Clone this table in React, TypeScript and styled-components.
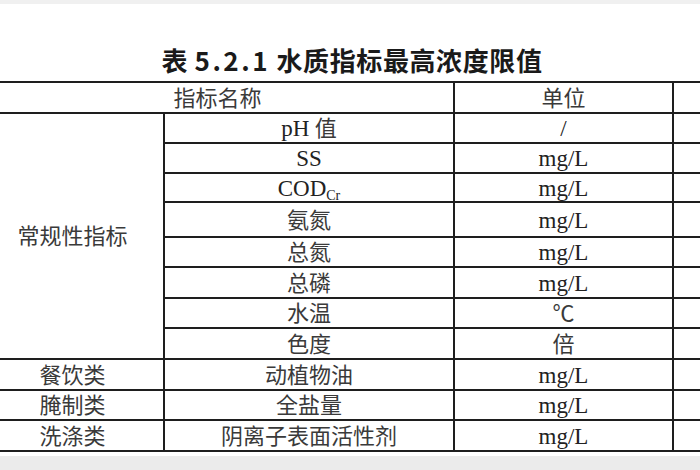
import React from "react";
import styled, { createGlobalStyle } from "styled-components";

const GlobalStyle = createGlobalStyle`
  body {
    margin: 0;
    background: #fff;
  }
`;

const Page = styled.div`
  width: 700px;
  height: 470px;
  overflow: hidden;
  display: flex;
  flex-direction: column;
  background: #fff;
`;

const TopBand = styled.div`
  height: 4px;
  background: #f0f0f0;
`;

const Title = styled.h1`
  margin: 41px 0 6px;
  padding-left: 4px;
  height: 30px;
  line-height: 30px;
  text-align: center;
  font-family: "Noto Sans CJK SC", sans-serif;
  font-size: 26px;
  font-weight: 700;
  letter-spacing: 0.6px;
  color: #1a1a1a;
`;

const Num = styled.span`
  letter-spacing: 2.5px;
`;

const TableWrap = styled.div`
  margin-left: -20px;
`;

const Table = styled.table`
  border-collapse: collapse;
  table-layout: fixed;
  width: 780px;
  font-family: "Liberation Serif", "Noto Sans CJK SC", serif;
  font-size: 22px;
  color: #3a3a3a;
`;

const Row = styled.tr<{ $h: number }>`
  height: ${(p) => p.$h}px;
`;

const Cell = styled.td`
  border: 2px solid #1e1e1e;
  padding: 2px 0 0;
  text-align: center;
  vertical-align: middle;
  line-height: 24px;
  white-space: nowrap;
`;

const Latin = styled.span`
  font-size: 23px;
  color: #222;
`;

const Sub = styled.sub`
  font-size: 14px;
  vertical-align: -4px;
  line-height: 0;
`;

const Footer = styled.div`
  flex: 1;
  margin-top: 4px;
  background: #ebebeb;
`;

const regular: [React.ReactNode, React.ReactNode, number][] = [
  [
    <>
      <Latin>pH</Latin> 值
    </>,
    <Latin>/</Latin>,
    30,
  ],
  [<Latin>SS</Latin>, <Latin>mg/L</Latin>, 30],
  [
    <Latin>
      COD<Sub>Cr</Sub>
    </Latin>,
    <Latin>mg/L</Latin>,
    29,
  ],
  ["氨氮", <Latin>mg/L</Latin>, 35],
  ["总氮", <Latin>mg/L</Latin>, 30],
  ["总磷", <Latin>mg/L</Latin>, 31],
  ["水温", "℃", 30],
  ["色度", "倍", 31],
];

const others: [string, string, number][] = [
  ["餐饮类", "动植物油", 31],
  ["腌制类", "全盐量", 30],
  ["洗涤类", "阴离子表面活性剂", 31],
];

const App = () => {
  return (
    <Page>
      <GlobalStyle />
      <TopBand />
      <Title>
        表 <Num>5.2.1</Num> 水质指标最高浓度限值
      </Title>
      <TableWrap>
        <Table>
          <colgroup>
            <col style={{ width: 183 }} />
            <col style={{ width: 290 }} />
            <col style={{ width: 219 }} />
            <col />
          </colgroup>
          <tbody>
            <Row $h={31}>
              <Cell colSpan={2}>指标名称</Cell>
              <Cell>单位</Cell>
              <Cell />
            </Row>
            {regular.map(([name, unit, h], i) => (
              <Row $h={h} key={i}>
                {i === 0 && <Cell rowSpan={regular.length}>常规性指标</Cell>}
                <Cell>{name}</Cell>
                <Cell>{unit}</Cell>
                <Cell />
              </Row>
            ))}
            {others.map(([kind, name, h]) => (
              <Row $h={h} key={kind}>
                <Cell>{kind}</Cell>
                <Cell>{name}</Cell>
                <Cell>
                  <Latin>mg/L</Latin>
                </Cell>
                <Cell />
              </Row>
            ))}
          </tbody>
        </Table>
      </TableWrap>
      <Footer />
    </Page>
  );
};

export default App;
